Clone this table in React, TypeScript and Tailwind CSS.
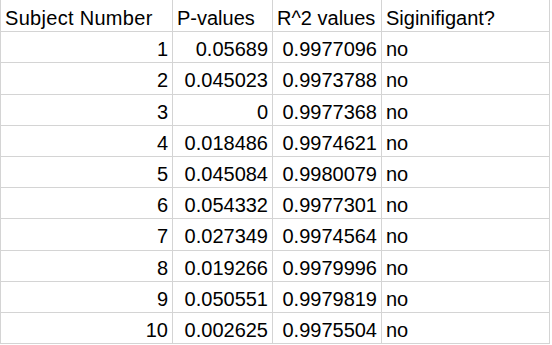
const rows = [
  { n: "1", p: "0.05689", r: "0.9977096", s: "no", h: "h-[31px]" },
  { n: "2", p: "0.045023", r: "0.9973788", s: "no", h: "h-[32px]" },
  { n: "3", p: "0", r: "0.9977368", s: "no", h: "h-[31px]" },
  { n: "4", p: "0.018486", r: "0.9974621", s: "no", h: "h-[31px]" },
  { n: "5", p: "0.045084", r: "0.9980079", s: "no", h: "h-[31px]" },
  { n: "6", p: "0.054332", r: "0.9977301", s: "no", h: "h-[31px]" },
  { n: "7", p: "0.027349", r: "0.9974564", s: "no", h: "h-[32px]" },
  { n: "8", p: "0.019266", r: "0.9979996", s: "no", h: "h-[31px]" },
  { n: "9", p: "0.050551", r: "0.9979819", s: "no", h: "h-[31px]" },
  { n: "10", p: "0.002625", r: "0.9975504", s: "no", h: "h-[31px]" },
];

const cell = "border-l border-b border-[#d4d4d4] px-[4px] whitespace-nowrap overflow-hidden";

export default function App() {
  return (
    <div className="w-[552px] h-[345px] bg-white text-black font-['Liberation_Sans',Arial,sans-serif] text-[20px] leading-[20px]">
      {/* header */}
      <div className="flex h-[32px]">
        <div className={`${cell} w-[172px] pt-[8px] tracking-[0.3px]`}>Subject Number</div>
        <div className={`${cell} w-[100px] pt-[8px]`}>P-values</div>
        <div className={`${cell} w-[109px] pt-[8px]`}>R^2 values</div>
        <div className={`${cell} w-[169px] pt-[8px] border-r`}>Siginifigant?</div>
      </div>
      {rows.map((row) => (
        <div key={row.n} className={`flex ${row.h}`}>
          <div className={`${cell} w-[172px] pt-[7px] text-right`}>{row.n}</div>
          <div className={`${cell} w-[100px] pt-[7px] text-right`}>{row.p}</div>
          <div className={`${cell} w-[109px] pt-[7px] text-right`}>{row.r}</div>
          <div className={`${cell} w-[169px] pt-[7px] border-r`}>{row.s}</div>
        </div>
      ))}
    </div>
  );
}
